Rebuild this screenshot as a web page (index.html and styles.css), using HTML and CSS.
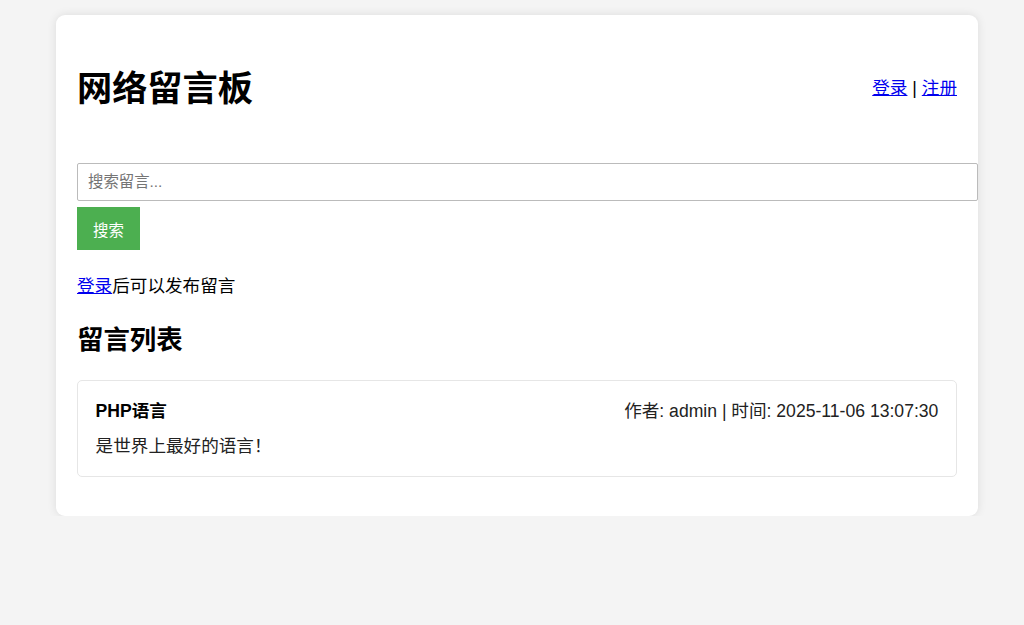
FILE: index.html
```html
<!DOCTYPE html>
<html lang="zh-CN">
<head>
<meta charset="utf-8">
<title>网络留言板</title>
<link rel="stylesheet" href="styles.css">
</head>
<body>
<div class="container">
  <header class="header">
    <h1 class="title">网络留言板</h1>
    <div class="auth"><a href="#">登录</a> | <a href="#">注册</a></div>
  </header>
  <form class="search">
    <input class="search-input" type="text" placeholder="搜索留言...">
    <button class="search-btn" type="button">搜索</button>
  </form>
  <p class="notice"><a href="#">登录</a>后可以发布留言</p>
  <h2 class="list-title">留言列表</h2>
  <div class="card">
    <div class="card-head">
      <strong class="card-title">PHP语言</strong>
      <span class="card-meta">作者: admin | 时间: 2025-11-06 13:07:30</span>
    </div>
    <p class="card-body">是世界上最好的语言！</p>
  </div>
</div>
</body>
</html>
```
FILE: styles.css
```css
html, body {
  margin: 0;
  padding: 0;
}
body {
  background: #f4f4f4;
  font-family: "Liberation Sans", Arial, "Noto Sans CJK SC", sans-serif;
  font-size: 17.6px;
  color: #000;
}
.container {
  width: 880px;
  margin: 15px 0 0 56px;
  padding: 22px 21px;
  background: #fff;
  border-radius: 9px;
  box-shadow: 0 0 10px rgba(0, 0, 0, 0.1);
}
.header {
  display: flex;
  justify-content: space-between;
  align-items: center;
  height: 102px;
}
.title {
  margin: 0;
  font-size: 35.2px;
  line-height: 51px;
  font-weight: bold;
}
.auth {
  line-height: 25px;
}
.auth a, .notice a {
  color: #0000ee;
}
.search {
  margin: 24px 0 0;
}
.search-input {
  display: block;
  box-sizing: border-box;
  width: 901px;
  height: 38px;
  margin: 0;
  padding: 0 10px;
  border: 1px solid #bbb;
  border-radius: 2px;
  font-family: inherit;
  font-size: 15.4px;
  color: #333;
}
.search-input::placeholder {
  color: #757575;
}
.search-btn {
  display: block;
  margin-top: 6px;
  width: 63px;
  height: 43px;
  border: none;
  padding: 0;
  background: #4caf50;
  color: #fff;
  font-family: inherit;
  font-size: 15.4px;
}
.notice {
  margin: 24px 0 0;
  line-height: 25px;
}
.list-title {
  margin: 22px 0 0;
  font-size: 26.4px;
  line-height: 38px;
  font-weight: bold;
}
.card {
  margin: 21px 0 17px;
  padding: 17.6px;
  border: 1px solid #e6e6e6;
  border-radius: 5px;
}
.card-head {
  display: flex;
  justify-content: space-between;
  align-items: center;
  line-height: 25px;
}
.card-title {
  font-weight: bold;
}
.card-meta {
  color: #222;
}
.card-body {
  margin: 10px 0 0;
  line-height: 25px;
  color: #222;
}
```
